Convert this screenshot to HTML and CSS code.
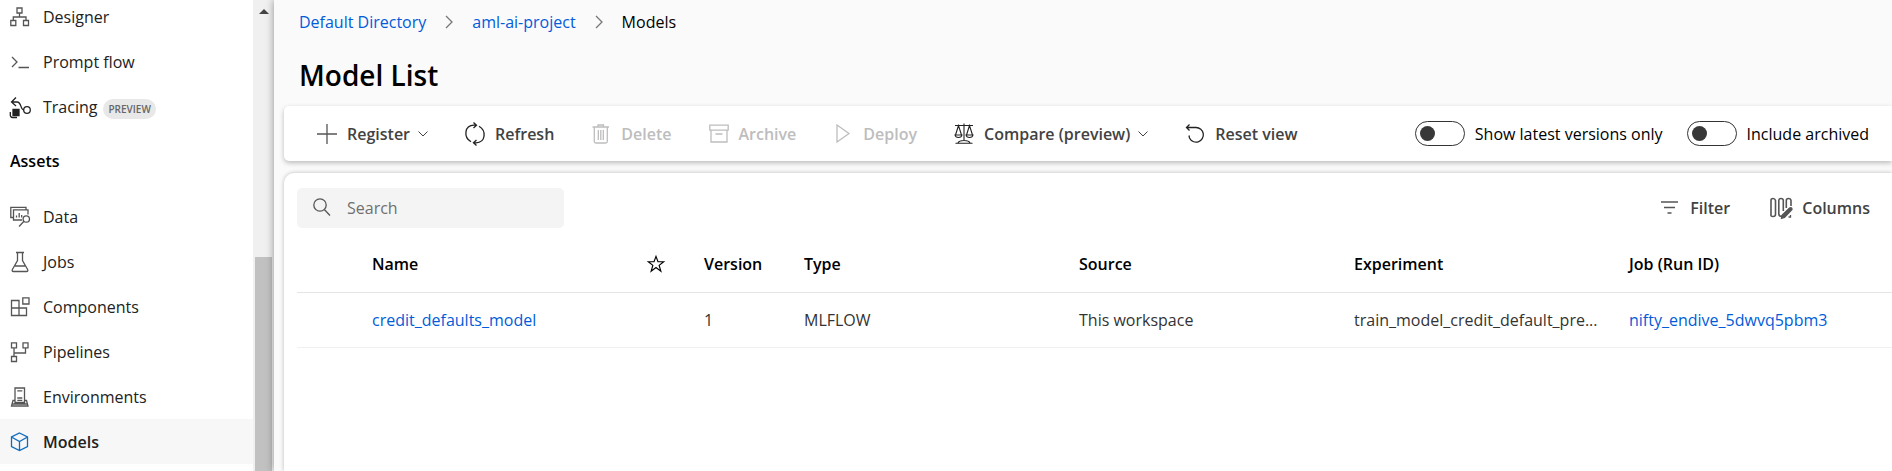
FILE: index.html
```html
<!DOCTYPE html>
<html lang="en">
<head>
    <meta charset="UTF-8">
    <meta name="viewport" content="width=device-width, initial-scale=1.0">
    <title>Model List</title>
    <link rel="stylesheet" href="styles.css">
</head>
<body>
    <aside class="sidebar">
        <nav class="nav">
            <a class="nav-item" href="#">
                <svg class="icon" viewBox="0 0 20 20"><path d="M7 1h5v5H7zM.8 13.500h5v5h-5zM13.500 13.500h5v5h-5zM9.500 6v4M3.300 13.500V10H16v3.500"/></svg>
                Designer
            </a>
            <a class="nav-item" href="#">
                <svg class="icon" viewBox="0 0 20 20"><path d="M2 5l5 5-5 5M8.500 15.500h10.500"/></svg>
                Prompt flow
            </a>
            <a class="nav-item" href="#">
                <svg class="icon icon-dark" viewBox="0 0 20 20"><path d="M6 .5L1.500 5 6 9M1.500 5H7c5 0 3 8 7 8"/><circle cx="17" cy="13" r="3.300"/><path class="fill" d="M3 12.500h6v6H3z"/><path d="M.3 15v2.500A2.500 2.500 0 0 0 2.500 20.500H7"/></svg>
                Tracing <span class="badge">PREVIEW</span>
            </a>
            <h2 class="nav-title">Assets</h2>
            <a class="nav-item" href="#">
                <svg class="icon" viewBox="0 0 20 20"><path d="M3 10.500H.8V.3H16V2.500M12 13H3.500V2.800h14.500V7.500M6.500 10.500v-2M9.200 10.500V6M11.700 10.500V8"/><circle cx="16.300" cy="12" r="3.200"/><path d="M14 14.300L9 19.500"/></svg>
                Data
            </a>
            <a class="nav-item" href="#">
                <svg class="icon" viewBox="0 0 20 20"><path d="M6 .5h8M7.500 .5v8L2.400 17.500q-.8 2 1 2h13.200q1.800 0 1-2L12.500 8.500v-8M5 14h10"/></svg>
                Jobs
            </a>
            <a class="nav-item" href="#">
                <svg class="icon" viewBox="0 0 20 20"><path d="M1.500 3.500h7.500v15h-7.500zM1.500 11h15v7.500h-15M12.800 .8h6.200V7h-6.200z"/></svg>
                Components
            </a>
            <a class="nav-item" href="#">
                <svg class="icon" viewBox="0 0 20 20"><path d="M1.500 .8h5v5h-5zM13 .8h5v5h-5zM1.500 14.500h5v5h-5zM4 5.800v8.700M4 11h11.500V5.800"/></svg>
                Pipelines
            </a>
            <a class="nav-item" href="#">
                <svg class="icon" viewBox="0 0 20 20"><path d="M5 15.500V1h9.500v14.500zM7.300 3.800h5M7.300 11h5M7.300 13.300h5M5 13.500H3l-1.500 5.500h16.500L16.500 13.500h-2M2.500 17h15"/></svg>
                Environments
            </a>
            <a class="nav-item active" href="#" aria-current="page">
                <svg class="icon icon-blue" viewBox="0 0 20 20"><path d="M9.500 1l8 4v9.500l-8 4-8-4V5zM1.500 5l8 4.500 8-4.500M9.500 9.500v9"/></svg>
                Models
            </a>
        </nav>
        <div class="scrollbar">
            <svg class="scroll-arrow" viewBox="0 0 10 5"><path d="M0 5l5-5 5 5z"/></svg>
            <div class="scroll-thumb"></div>
        </div>
    </aside>

    <main class="main">
        <nav class="breadcrumb">
            <a href="#">Default Directory</a>
            <svg class="crumb-arrow" viewBox="0 0 8 14"><path d="M1 1l6 6-6 6"/></svg>
            <a href="#">aml-ai-project</a>
            <svg class="crumb-arrow" viewBox="0 0 8 14"><path d="M1 1l6 6-6 6"/></svg>
            <span>Models</span>
        </nav>
        <h1 class="title">Model List</h1>

        <div class="toolbar">
            <button class="btn" type="button">
                <svg class="icon" viewBox="0 0 20 20"><path d="M10 0v20M0 10h20"/></svg>
                Register
                <svg class="chevron" viewBox="0 0 10 6"><path d="M.5.500L5 5 9.500.500"/></svg>
            </button>
            <button class="btn" type="button">
                <svg class="icon icon-dark" viewBox="0 0 20 20"><path d="M6 17.800C-1.500 13.500-1 1.500 9 1.200h2.500M8.500-1.500l3 2.700-3 2.800M14 2.200c7.500 4.300 7 16.300-3 16.600H8.500M11.500 16l-3 2.800 3 2.700"/></svg>
                Refresh
            </button>
            <button class="btn" type="button" disabled>
                <svg class="icon" viewBox="0 0 20 20"><path d="M1.500 3h16.500M7 3V1h5.500v2M3.300 3v14.500q0 1.500 1.500 1.500h10q1.500 0 1.500-1.500V3M7.300 6v10M9.800 6v10M12.300 6v10"/></svg>
                Delete
            </button>
            <button class="btn" type="button" disabled>
                <svg class="icon" viewBox="0 0 20 20"><path d="M.8 1.200h18.400v5H.8zM2 6.200h16v11.800H2zM6.500 10h7"/></svg>
                Archive
            </button>
            <button class="btn" type="button" disabled>
                <svg class="icon" viewBox="0 0 20 20"><path d="M4 1l12 8.500L4 18z"/></svg>
                Deploy
            </button>
            <button class="btn" type="button">
                <svg class="icon icon-dark icon-thin" viewBox="0 0 20 20"><path d="M1 1.500h18M10-.5v17M4.500 1.500L1.500 11h6zM15.500 1.500l-3 9.500h6zM1 11q.5 2.500 3.500 2.500T8 11zM12 11q.5 2.500 3.500 2.500T19 11zM1.500 19.300h17M4 19q1-2.500 6-2.500t6 2.500"/></svg>
                Compare (preview)
                <svg class="chevron" viewBox="0 0 10 6"><path d="M.5.500L5 5 9.500.500"/></svg>
            </button>
            <button class="btn" type="button">
                <svg class="icon icon-dark" viewBox="0 0 20 20"><path d="M4.500 .5L1.500 3.500l3 3M1.500 3.500H11a7.300 7.300 0 1 1-6.500 10.500L4 11.500"/></svg>
                Reset view
            </button>
            <div class="toggles">
                <label class="toggle"><input type="checkbox" role="switch">Show latest versions only</label>
                <label class="toggle"><input type="checkbox" role="switch">Include archived</label>
            </div>
        </div>

        <section class="card">
            <div class="card-top">
                <label class="search">
                    <svg class="icon" viewBox="0 0 20 20"><circle cx="8" cy="7" r="6.200"/><path d="M12.300 11.500L18 17.500"/></svg>
                    <input type="search" placeholder="Search" aria-label="Search">
                </label>
                <div class="card-actions">
                    <button class="btn" type="button">
                        <svg class="icon" viewBox="0 0 20 20"><path class="thick" d="M1 4h17M4 9.500h11M7.500 15h4"/></svg>
                        Filter
                    </button>
                    <button class="btn" type="button">
                        <svg class="icon icon-wide" viewBox="0 0 22 20"><path class="thick" d="M1 2.500Q1 .5 3 .5T5.500 2.500v14Q5.500 18.500 3 18.500T1 16.500zM12 18.500Q8.800 18.500 8.800 16V2.500Q8.800 .5 11 .5T13.300 2.500V13M16.300 10V2.500Q16.300 .5 18.500 .5T21 2.500V8"/><path class="fill" d="M19.500 10q2.500-1 2.500 1.500l-7.500 8-3 .8.500-3z"/><path d="M20.500 17v2h-2"/></svg>
                        Columns
                    </button>
                </div>
            </div>
            <table class="models">
                <colgroup>
                    <col class="col-select">
                    <col class="col-wide">
                    <col class="col-star">
                    <col class="col-version">
                    <col class="col-wide">
                    <col class="col-wide">
                    <col class="col-wide">
                    <col>
                </colgroup>
                <thead>
                    <tr>
                        <th></th>
                        <th>Name</th>
                        <th><svg class="star" viewBox="0 0 20 20"><path d="M10 1.500l2.200 6h6.300l-5 4 1.900 6.500-5.400-4-5.400 4 1.900-6.500-5-4h6.300z"/></svg></th>
                        <th>Version</th>
                        <th>Type</th>
                        <th>Source</th>
                        <th>Experiment</th>
                        <th>Job (Run ID)</th>
                    </tr>
                </thead>
                <tbody>
                    <tr>
                        <td></td>
                        <td><a href="#">credit_defaults_model</a></td>
                        <td></td>
                        <td>1</td>
                        <td>MLFLOW</td>
                        <td>This workspace</td>
                        <td>train_model_credit_default_pre...</td>
                        <td><a href="#">nifty_endive_5dwvq5pbm3</a></td>
                    </tr>
                </tbody>
            </table>
        </section>
    </main>
</body>
</html>
```

FILE: styles.css
```css
* {
    box-sizing: border-box;
}

body {
    margin: 0;
    display: flex;
    height: 100vh;
    overflow: hidden;
    font-family: "Segoe UI", "Open Sans", "Noto Sans", sans-serif;
    font-size: 16px;
    line-height: 24px;
    color: #000;
    background-color: #fafafa;
}

a {
    color: #015cda;
    text-decoration: none;
}

svg {
    flex: none;
    fill: none;
    stroke: currentColor;
    stroke-width: 1.3;
    overflow: visible;
}

.icon {
    width: 20px;
    height: 20px;
    color: #555;
}

.icon-dark {
    color: #222;
}

.icon-blue {
    color: #0f6cbd;
}

.icon-wide {
    width: 22px;
}

.icon-thin {
    stroke-width: 1.1;
}

.fill {
    fill: currentColor;
}

.thick {
    stroke-width: 1.6;
}

/* sidebar */
.sidebar {
    display: flex;
    flex: none;
    width: 274px;
    background-color: #fff;
}

/* list is scrolled, so the first row is partly cut off */
.nav {
    flex: 1;
    margin-top: -6px;
}

.nav-item {
    display: flex;
    align-items: center;
    gap: 13px;
    height: 45px;
    padding-left: 10px;
    color: #222;
}

.nav-item.active {
    background-color: #f7f7f7;
    font-weight: 600;
}

.nav-title {
    margin: 0;
    padding-left: 10px;
    font-size: 16px;
    font-weight: 600;
    line-height: 65px;
}

.badge {
    margin: 4px 0 0 -7px;
    padding: 0 5px;
    border-radius: 10px;
    background-color: #e8e8e8;
    color: #666;
    font-size: 10px;
    font-weight: 600;
    line-height: 20px;
}

.scrollbar {
    display: flex;
    flex-direction: column;
    align-items: center;
    width: 21px;
    padding-top: 9px;
    background-color: #f0f0f0;
}

.scroll-arrow {
    width: 10px;
    height: 5px;
    margin-bottom: 243px;
}

.scroll-arrow path {
    fill: #444;
    stroke: none;
}

.scroll-thumb {
    flex: 1;
    width: 17px;
    background-color: #c1c1c1;
}

/* main area */
.main {
    display: flex;
    flex-direction: column;
    flex: 1;
    min-width: 0;
    padding-left: 10px;
    background-color: #fafafa;
    box-shadow: 0 0 8px rgba(0, 0, 0, 0.4);
}

.breadcrumb {
    display: flex;
    align-items: center;
    gap: 19px;
    padding: 10px 15px 0;
}

.crumb-arrow {
    width: 8px;
    height: 14px;
    color: #777;
}

.title {
    margin: 0;
    padding: 21px 15px 11px;
    font-size: 28px;
    font-weight: 600;
    line-height: 40px;
}

.toolbar {
    display: flex;
    flex: none;
    align-items: center;
    gap: 37px;
    height: 55px;
    padding: 0 23px 0 33px;
    border-radius: 5px 0 0 5px;
    background-color: #fff;
    box-shadow: 0 2px 5px rgba(0, 0, 0, 0.25);
}

.btn {
    display: flex;
    align-items: center;
    gap: 10px;
    padding: 0;
    border: none;
    background: none;
    color: #424242;
    font: inherit;
    font-weight: 600;
    white-space: nowrap;
    cursor: pointer;
}

.btn:disabled,
.btn:disabled .icon {
    color: #bdbdbd;
    cursor: default;
}

.chevron {
    width: 10px;
    height: 6px;
    margin-left: -2px;
    stroke-width: 1;
}

.toggles {
    display: flex;
    gap: 24px;
    margin-left: auto;
}

.toggle {
    display: flex;
    align-items: center;
    gap: 10px;
    white-space: nowrap;
}

.toggle input {
    appearance: none;
    display: flex;
    align-items: center;
    width: 50px;
    height: 25px;
    margin: 0;
    padding: 0 4px;
    border: 1px solid #333;
    border-radius: 13px;
}

.toggle input::before {
    content: "";
    width: 15px;
    height: 15px;
    border-radius: 50%;
    background-color: #383838;
}

.toggle input:checked::before {
    margin-left: auto;
}

/* table card */
.card {
    flex: 1;
    margin-top: 12px;
    padding: 15px 0 0 13px;
    border-radius: 10px 0 0 0;
    background-color: #fff;
    box-shadow: 0 0 4px rgba(0, 0, 0, 0.25);
}

.card-top {
    display: flex;
    align-items: center;
    justify-content: space-between;
    padding-right: 22px;
}

.search {
    display: flex;
    align-items: center;
    gap: 15px;
    width: 267px;
    height: 40px;
    padding: 0 15px;
    border-radius: 5px;
    background-color: #f4f4f4;
}

.search input {
    flex: 1;
    min-width: 0;
    padding: 0;
    border: none;
    outline: none;
    background: none;
    font: inherit;
}

.search input::placeholder {
    color: #707070;
}

.card-actions {
    display: flex;
    gap: 40px;
}

.models {
    width: 100%;
    table-layout: fixed;
    border-collapse: collapse;
    text-align: left;
}

.col-select {
    width: 65px;
}

.col-wide {
    width: 275px;
}

.col-star {
    width: 57px;
}

.col-version {
    width: 100px;
}

.models th,
.models td {
    height: 55px;
    padding: 0 10px;
    overflow: hidden;
    text-overflow: ellipsis;
    white-space: nowrap;
    border-bottom: 1px solid #f0f0f0;
}

.models th {
    height: 64px;
    padding-top: 8px;
    font-weight: 600;
    border-bottom-color: #e5e5e5;
}

.models td {
    color: #333;
}

.star {
    display: block;
    width: 18px;
    height: 18px;
}
```
